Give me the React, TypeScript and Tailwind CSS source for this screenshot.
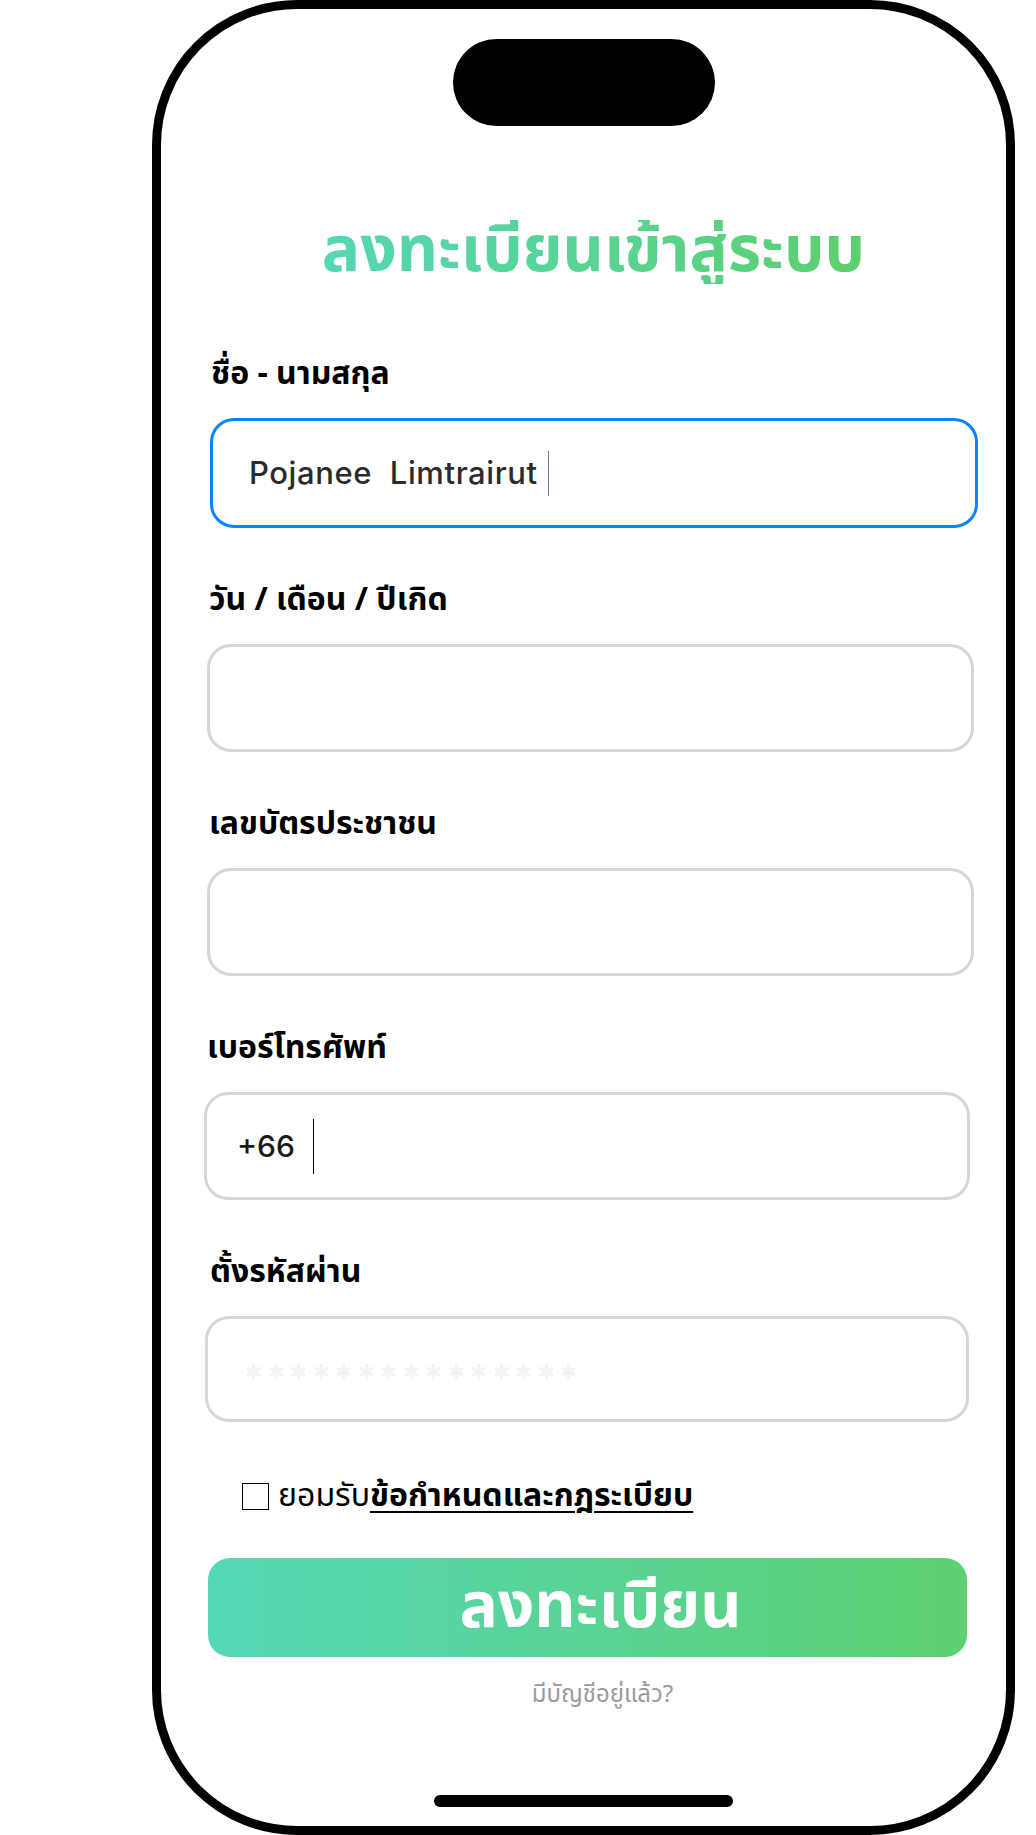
import type { ReactNode } from "react";

const THAI = "font-['Noto_Sans_Thai','Noto_Sans_Thai_UI','Noto_Sans',sans-serif]";

function Label({ children, ml }: { children: ReactNode; ml: string }) {
  return (
    <div className={`flex h-[40px] items-center ${ml} text-[32px] font-bold leading-none text-black ${THAI}`}>
      {children}
    </div>
  );
}

function Field({
  label,
  labelMl,
  boxClass,
  children,
}: {
  label: string;
  labelMl: string;
  boxClass: string;
  children?: ReactNode;
}) {
  return (
    <div className="flex flex-col">
      <Label ml={labelMl}>{label}</Label>
      <div className={`mt-[24px] flex items-center rounded-[24px] border-[3px] ${boxClass}`}>{children}</div>
    </div>
  );
}

export default function App() {
  return (
    <div className="h-[1835px] w-[1036px] overflow-hidden bg-white">
      <div className="ml-[152px] flex h-[1835px] w-[863px] flex-col rounded-[145px] border-[9px] border-black bg-white">
        {/* dynamic island */}
        <div className="mx-auto mt-[30px] h-[87px] w-[262px] rounded-full bg-black" />

        <div className="mt-[86px] flex h-[80px] items-center justify-center pl-[20px]">
          <h1
            className={`bg-gradient-to-r from-[#54d7b5] to-[#5dcf6c] bg-clip-text text-[64px] font-bold leading-none text-transparent ${THAI}`}
          >
            ลงทะเบียนเข้าสู่ระบบ
          </h1>
        </div>

        <div className="mt-[62px] flex flex-col gap-[52px]">
          <Field label="ชื่อ - นามสกุล" labelMl="ml-[50px]" boxClass="ml-[49px] h-[110px] w-[768px] border-[#0a84ff] pl-[36px]">
            <span className="font-['Inter',sans-serif] text-[31px] font-medium tracking-[0.6px] text-[#2b2b2b]">
              Pojanee&nbsp;&nbsp;Limtrairut
            </span>
            <span className="ml-[10px] h-[45px] w-[1px] bg-[#5a78a8]" />
          </Field>
          <Field label="วัน / เดือน / ปีเกิด" labelMl="ml-[48px]" boxClass="ml-[46px] h-[108px] w-[767px] border-[#d6d6d6]" />
          <Field label="เลขบัตรประชาชน" labelMl="ml-[48px]" boxClass="ml-[46px] h-[108px] w-[767px] border-[#d6d6d6]" />
          <Field label="เบอร์โทรศัพท์" labelMl="ml-[46px]" boxClass="ml-[43px] h-[108px] w-[766px] border-[#d6d6d6] pl-[30px]">
            <span className="font-['Inter',sans-serif] text-[30px] font-medium text-[#1a1a1a]">+66</span>
            <span className="ml-[18px] h-[55px] w-[1px] bg-black" />
          </Field>
          <Field label="ตั้งรหัสผ่าน" labelMl="ml-[49px]" boxClass="ml-[44px] h-[106px] w-[764px] border-[#d6d6d6] pl-[38px]">
            <span className="flex gap-[7.5px] pt-[4px]">
              {Array.from({ length: 15 }).map((_, i) => (
                <svg key={i} width="15" height="15" viewBox="0 0 16 16">
                  <g stroke="#f3f3f3" strokeWidth="3.6" strokeLinecap="round">
                    <line x1="8" y1="1.5" x2="8" y2="14.5" />
                    <line x1="2.4" y1="4.8" x2="13.6" y2="11.2" />
                    <line x1="2.4" y1="11.2" x2="13.6" y2="4.8" />
                  </g>
                </svg>
              ))}
            </span>
          </Field>
        </div>

        <div className={`ml-[81px] mt-[54px] flex h-[40px] items-center text-[32px] leading-none text-black ${THAI}`}>
          <span className="h-[27px] w-[27px] shrink-0 border border-black" />
          <span className="ml-[9px]">ยอมรับ</span>
          <span className="font-bold underline decoration-[2px] underline-offset-[5px]">ข้อกำหนดและกฎระเบียบ</span>
        </div>

        <button
          className={`ml-[47px] mt-[42px] flex h-[99px] w-[759px] items-center justify-center rounded-[22px] bg-gradient-to-r from-[#55d7b6] to-[#5dd06f] pl-[26px] text-[64px] font-bold leading-none text-white ${THAI}`}
        >
          ลงทะเบียน
        </button>

        <div className={`mt-[23px] flex h-[30px] items-center justify-center pl-[38px] text-[24px] leading-none text-[#9b9b9b] ${THAI}`}>
          มีบัญชีอยู่แล้ว?
        </div>

        <div className="mx-auto mt-[85px] h-[12px] w-[299px] rounded-full bg-black" />
      </div>
    </div>
  );
}
